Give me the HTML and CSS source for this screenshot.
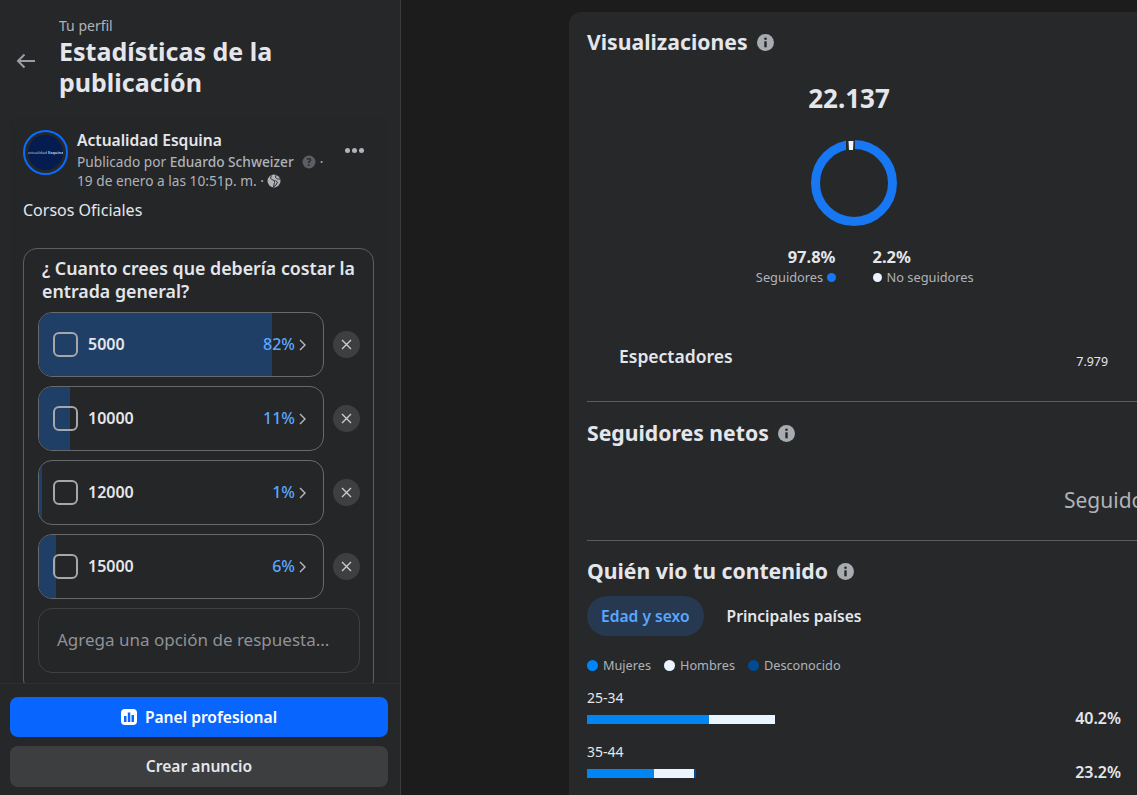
FILE: index.html
```html
<!DOCTYPE html>
<html lang="es">
<head>
    <meta charset="UTF-8">
    <title>Estadísticas de la publicación</title>
    <link rel="stylesheet" href="styles.css">
</head>
<body>

    <!-- Left column -->
    <aside class="sidebar">
        <header class="side-head">
            <svg class="back" width="20" height="16" viewBox="0 0 20 16"><path d="M19 8H2M8.500 1.500 2 8l6.500 6.500" fill="none" stroke="#9a9da2" stroke-width="2"/></svg>
            <div>
                <div class="crumb">Tu perfil</div>
                <h1>Estadísticas de la publicación</h1>
            </div>
        </header>

        <div class="post">
            <div class="post-head">
                <div class="avatar"><div class="avatar-in"><span>actualidad <b>Esquina</b></span></div></div>
                <div class="post-meta">
                    <div class="page-name">Actualidad Esquina</div>
                    <div class="meta-line">Publicado por <b>Eduardo Schweizer</b>
                        <svg class="help" width="14" height="14" viewBox="0 0 14 14"><circle cx="7" cy="7" r="6.500" fill="#5b5e63"/><text x="7" y="10.500" text-anchor="middle" font-size="10" font-weight="700" fill="#25262a">?</text></svg> ·</div>
                    <div class="meta-line">19 de enero a las 10:51p. m. ·
                        <svg class="globe" width="14" height="14" viewBox="0 0 14 14"><circle cx="7" cy="7" r="6.500" fill="#b0b3b8"/><path d="M4.500 1.500 3.500 4l2 2 2 .5v2L6.500 13 9 11l1.500-3-2-1.500M9 1l-.5 2.500 2 1.500 3 0" fill="none" stroke="#25262a" stroke-width=".9"/></svg></div>
                </div>
                <div class="dots"><i></i><i></i><i></i></div>
            </div>
            <p class="post-text">Corsos Oficiales</p>

            <div class="poll">
                <div class="question">¿ Cuanto crees que debería costar la entrada general?</div>

                <div class="row">
                    <div class="option">
                        <div class="fill" style="width: 82%"></div>
                        <span class="check"></span><span class="value">5000</span><span class="pct">82%</span>
                        <svg class="chev" width="7" height="12" viewBox="0 0 7 12"><path d="M1 1l5 5-5 5" fill="none" stroke="#b8bbc0" stroke-width="1.400"/></svg>
                    </div>
                    <button class="close"><svg width="11" height="11" viewBox="0 0 11 11"><path d="M1 1l9 9M10 1l-9 9" stroke="#c9ccd1" stroke-width="1.400"/></svg></button>
                </div>
                <div class="row">
                    <div class="option">
                        <div class="fill" style="width: 11%"></div>
                        <span class="check"></span><span class="value">10000</span><span class="pct">11%</span>
                        <svg class="chev" width="7" height="12" viewBox="0 0 7 12"><path d="M1 1l5 5-5 5" fill="none" stroke="#b8bbc0" stroke-width="1.400"/></svg>
                    </div>
                    <button class="close"><svg width="11" height="11" viewBox="0 0 11 11"><path d="M1 1l9 9M10 1l-9 9" stroke="#c9ccd1" stroke-width="1.400"/></svg></button>
                </div>
                <div class="row">
                    <div class="option">
                        <div class="fill" style="width: 1%"></div>
                        <span class="check"></span><span class="value">12000</span><span class="pct">1%</span>
                        <svg class="chev" width="7" height="12" viewBox="0 0 7 12"><path d="M1 1l5 5-5 5" fill="none" stroke="#b8bbc0" stroke-width="1.400"/></svg>
                    </div>
                    <button class="close"><svg width="11" height="11" viewBox="0 0 11 11"><path d="M1 1l9 9M10 1l-9 9" stroke="#c9ccd1" stroke-width="1.400"/></svg></button>
                </div>
                <div class="row">
                    <div class="option">
                        <div class="fill" style="width: 6%"></div>
                        <span class="check"></span><span class="value">15000</span><span class="pct">6%</span>
                        <svg class="chev" width="7" height="12" viewBox="0 0 7 12"><path d="M1 1l5 5-5 5" fill="none" stroke="#b8bbc0" stroke-width="1.400"/></svg>
                    </div>
                    <button class="close"><svg width="11" height="11" viewBox="0 0 11 11"><path d="M1 1l9 9M10 1l-9 9" stroke="#c9ccd1" stroke-width="1.400"/></svg></button>
                </div>

                <div class="add-option">Agrega una opción de respuesta...</div>
            </div>
        </div>

        <footer class="side-foot">
            <button class="btn btn-blue">
                <svg width="16" height="16" viewBox="0 0 16 16"><rect width="16" height="16" rx="4" fill="#fff"/><path d="M3 7h2.500v6H3zM6.800 3.500h2.500V13H6.800zM10.500 6h2.500v7h-2.500z" fill="#0866ff"/></svg>
                <span>Panel profesional</span>
            </button>
            <button class="btn btn-gray"><span>Crear anuncio</span></button>
        </footer>
    </aside>

    <!-- Stats card -->
    <main class="content">
        <div class="card">
            <section class="views">
                <h2>Visualizaciones <svg class="info" width="17" height="17" viewBox="0 0 17 17"><use href="#info"/></svg></h2>
                <div class="total">22.137</div>
                <svg class="donut" width="86" height="86" viewBox="0 0 86 86">
                    <circle cx="43" cy="43" r="38.500" fill="none" stroke="#1877f2" stroke-width="9"/>
                    <path d="M35 0h9v10h-9z" fill="#26282a"/>
                    <path d="M37.500 1h5l-.5 9h-4z" fill="#ebf5ff"/>
                </svg>
                <div class="split">
                    <div class="split-col left">
                        <b>97.8%</b>
                        <span>Seguidores <i class="dot dot-blue"></i></span>
                    </div>
                    <div class="split-col">
                        <b>2.2%</b>
                        <span><i class="dot dot-white"></i>No seguidores</span>
                    </div>
                </div>
                <div class="viewers"><span class="viewers-label">Espectadores</span><span class="viewers-num">7.979</span></div>
            </section>

            <section class="net">
                <h2>Seguidores netos <svg class="info" width="17" height="17" viewBox="0 0 17 17"><use href="#info"/></svg></h2>
                <div class="net-label">Seguidores</div>
            </section>

            <section class="who">
                <h2>Quién vio tu contenido <svg class="info" width="17" height="17" viewBox="0 0 17 17"><use href="#info"/></svg></h2>
                <div class="tabs">
                    <span class="tab active">Edad y sexo</span>
                    <span class="tab">Principales países</span>
                </div>
                <div class="legend">
                    <span><i class="dot dot-women"></i>Mujeres</span>
                    <span><i class="dot dot-white"></i>Hombres</span>
                    <span><i class="dot dot-unknown"></i>Desconocido</span>
                </div>
                <div class="age">
                    <div class="age-label">25-34</div>
                    <div class="age-row">
                        <div class="bar"><i class="women" style="width: 122px"></i><i class="men" style="width: 66px"></i></div>
                        <b>40.2%</b>
                    </div>
                </div>
                <div class="age">
                    <div class="age-label">35-44</div>
                    <div class="age-row">
                        <div class="bar"><i class="women" style="width: 67px"></i><i class="men" style="width: 40px"></i><i class="unknown" style="width: 2px"></i></div>
                        <b>23.2%</b>
                    </div>
                </div>
            </section>
        </div>
    </main>

    <svg width="0" height="0" class="defs">
        <symbol id="info" viewBox="0 0 17 17">
            <circle cx="8.500" cy="8.500" r="8.500" fill="#a8abb0"/>
            <circle cx="8.500" cy="4.800" r="1.300" fill="#26282a"/>
            <path d="M7.300 7.300h2.400v6H7.300z" fill="#26282a"/>
        </symbol>
    </svg>
</body>
</html>
```
FILE: styles.css
```css
body {
    margin: 0;
    height: 795px;
    display: flex;
    overflow: hidden;
    background-color: #1c1c1d;
    color: #e4e6eb;
    font-family: 'Noto Sans', sans-serif;
}

.defs {
    position: absolute;
}

h1, h2, p {
    margin: 0;
}

/* Left column */
.sidebar {
    width: 400px;
    height: 795px;
    flex-shrink: 0;
    display: flex;
    flex-direction: column;
    background-color: #262729;
    border-right: 1px solid #3a3b3d;
}

.side-head {
    display: flex;
    align-items: center;
    height: 118px;
    padding: 0 12px 4px 16px;
    box-sizing: border-box;
}

.back {
    width: 20px;
    margin-right: 23px;
    margin-top: 8px;
    flex-shrink: 0;
}

.crumb {
    font-size: 14px;
    line-height: 20px;
    color: #b0b3b8;
}

h1 {
    font-size: 25px;
    line-height: 31px;
    font-weight: 700;
    color: #e4e6eb;
}

/* Post */
.post {
    flex: 1;
    min-height: 0;
    overflow: hidden;
    margin: 0 12px 0 10px;
    padding: 12px 14px 0 13px;
    background-color: #252628;
    border-radius: 8px 8px 0 0;
}

.post-head {
    display: flex;
    gap: 9px;
}

.avatar {
    width: 45px;
    height: 45px;
    flex-shrink: 0;
    padding: 3px;
    box-sizing: border-box;
    border: 2px solid #0a6cff;
    border-radius: 50%;
}

.avatar-in {
    width: 100%;
    height: 100%;
    border-radius: 50%;
    background-color: #041c50;
    display: flex;
    align-items: center;
    justify-content: center;
    overflow: hidden;
}

.avatar-in span {
    font-size: 4px;
    line-height: 5px;
    color: #b9c2da;
    white-space: nowrap;
}

.post-meta {
    flex: 1;
    min-width: 0;
}

.page-name {
    font-size: 15.600px;
    line-height: 20px;
    font-weight: 600;
}

.meta-line {
    font-size: 13.700px;
    line-height: 19px;
    color: #b0b3b8;
    white-space: nowrap;
}

.meta-line:nth-child(2) {
    margin-top: 2px;
}

.meta-line b {
    font-weight: 500;
}

.help {
    margin-left: 5px;
    vertical-align: -2px;
}

.globe {
    vertical-align: -2px;
}

.dots {
    display: flex;
    gap: 2px;
    padding: 18px 10px 0 0;
}

.dots i {
    width: 5px;
    height: 5px;
    border-radius: 50%;
    background-color: #b0b3b8;
}

.post-text {
    margin-top: 9px;
    font-size: 16px;
    line-height: 22px;
}

/* Poll */
.poll {
    margin-top: 27px;
    padding: 8px 13px 20px 14px;
    border: 1px solid #5c5e61;
    border-radius: 14px;
}

.question {
    padding-left: 4px;
    margin-bottom: 9px;
    font-size: 17.800px;
    line-height: 23px;
    font-weight: 600;
}

.row {
    display: flex;
    align-items: center;
    gap: 9px;
    margin-bottom: 9px;
}

.option {
    position: relative;
    flex: 1;
    height: 65px;
    display: flex;
    align-items: center;
    padding: 0 17px 0 14px;
    box-sizing: border-box;
    overflow: hidden;
    border: 1px solid #67696c;
    border-radius: 14px;
}

.fill {
    position: absolute;
    top: 0;
    bottom: 0;
    left: 0;
    background-color: #1f3f66;
}

.check, .value, .pct, .chev {
    position: relative;
}

.check {
    width: 25px;
    height: 25px;
    box-sizing: border-box;
    border: 2px solid #a5a7ab;
    border-radius: 6px;
}

.value {
    flex: 1;
    margin-left: 10px;
    padding-bottom: 2px;
    font-size: 16px;
    font-weight: 600;
}

.pct {
    margin-right: 4px;
    padding-bottom: 2px;
    font-size: 16px;
    font-weight: 500;
    color: #5aa7ff;
}

.close {
    width: 27px;
    height: 27px;
    flex-shrink: 0;
    padding: 0;
    border: none;
    border-radius: 50%;
    background-color: #3e3f41;
    display: flex;
    align-items: center;
    justify-content: center;
}

.add-option {
    height: 65px;
    padding: 0 0 2px 18px;
    display: flex;
    align-items: center;
    box-sizing: border-box;
    border: 1px solid #3e4042;
    border-radius: 14px;
    font-size: 17px;
    color: #8f9297;
}

/* Footer buttons */
.side-foot {
    display: flex;
    flex-direction: column;
    gap: 9px;
    padding: 13px 12px 8px 10px;
    background-color: #262729;
    border-top: 1px solid #2e2f31;
}

.btn {
    height: 40px;
    border: none;
    border-radius: 8px;
    display: flex;
    align-items: center;
    justify-content: center;
    gap: 8px;
    font-family: inherit;
    font-size: 15.600px;
    font-weight: 600;
}

.btn-blue {
    background-color: #0866ff;
    color: #ffffff;
}

.btn-gray {
    height: 41px;
    background-color: #3d3e40;
    color: #e4e6eb;
}

.btn-gray span {
    padding-bottom: 2px;
}

/* Right side */
.content {
    flex: 1;
    min-width: 0;
    padding: 12px 0 0 168px;
}

.card {
    width: 620px;
    height: 800px;
    padding: 14px 0 0 18px;
    box-sizing: border-box;
    background-color: #26282a;
    border-radius: 12px;
}

h2 {
    font-size: 21.200px;
    line-height: 32px;
    font-weight: 700;
    color: #e4e6eb;
    display: flex;
    align-items: center;
    gap: 9px;
}

.views {
    height: 376px;
    box-sizing: border-box;
    border-bottom: 1px solid #5a5c5f;
}

.total {
    width: 524px;
    margin-top: 23px;
    text-align: center;
    font-size: 26px;
    line-height: 34px;
    font-weight: 700;
}

.donut {
    display: block;
    margin: 25px 0 0 224px;
}

.split {
    width: 534px;
    margin-top: 20px;
    display: grid;
    grid-template-columns: 1fr 1fr;
    column-gap: 37px;
}

.split-col {
    display: flex;
    flex-direction: column;
}

.split-col.left {
    align-items: flex-end;
}

.split-col b {
    font-size: 16.500px;
    line-height: 22px;
    font-weight: 700;
}

.split-col span {
    font-size: 12.800px;
    line-height: 19px;
    color: #b0b3b8;
}

.split-col span .dot-white {
    margin-right: 5px;
}

.dot {
    display: inline-block;
    width: 9px;
    height: 9px;
    border-radius: 50%;
}

.dot-blue {
    background-color: #1877f2;
}

.dot-white {
    background-color: #ebf5ff;
}

.dot-women {
    background-color: #0085f2;
}

.dot-unknown {
    background-color: #004a96;
}

.viewers {
    width: 534px;
    margin-top: 57px;
    padding: 0 13px 0 32px;
    box-sizing: border-box;
    display: flex;
    justify-content: space-between;
}

.viewers-label {
    font-size: 17.500px;
    line-height: 24px;
    font-weight: 600;
}

.viewers-num {
    margin-top: 8px;
    font-size: 12.400px;
    line-height: 20px;
}

.net {
    height: 139px;
    padding-top: 15px;
    box-sizing: border-box;
    border-bottom: 1px solid #5a5c5f;
}

.net-label {
    margin: 36px 0 0 477px;
    font-size: 21px;
    line-height: 30px;
    color: #b0b3b8;
    white-space: nowrap;
}

.who {
    padding-top: 14px;
}

.tabs {
    display: flex;
    gap: 9px;
    margin-top: 9px;
}

.tab {
    height: 40px;
    padding: 0 14px;
    box-sizing: border-box;
    display: flex;
    align-items: center;
    font-size: 15.600px;
    font-weight: 600;
    border-radius: 20px;
}

.tab.active {
    background-color: #263951;
    color: #5aa7ff;
}

.legend {
    display: flex;
    gap: 13px;
    margin-top: 20px;
    padding-bottom: 1px;
    font-size: 12.700px;
    line-height: 18px;
    color: #b0b3b8;
}

.legend .dot {
    width: 11px;
    height: 11px;
    margin-right: 5px;
    vertical-align: -1px;
}

.age {
    width: 534px;
    margin-top: 14px;
}

.age-label {
    font-size: 14px;
    line-height: 18px;
}

.age-row {
    display: flex;
    justify-content: space-between;
    align-items: center;
    height: 21px;
    margin-top: 1px;
}

.age-row b {
    font-size: 16px;
    font-weight: 600;
    margin-bottom: 2px;
}

.bar {
    display: flex;
    height: 9px;
    margin-top: 2px;
}

.bar i {
    display: block;
    height: 100%;
}

.women {
    background-color: #0085f2;
}

.men {
    background-color: #ebf5ff;
}

.unknown {
    background-color: #004a96;
}
```
